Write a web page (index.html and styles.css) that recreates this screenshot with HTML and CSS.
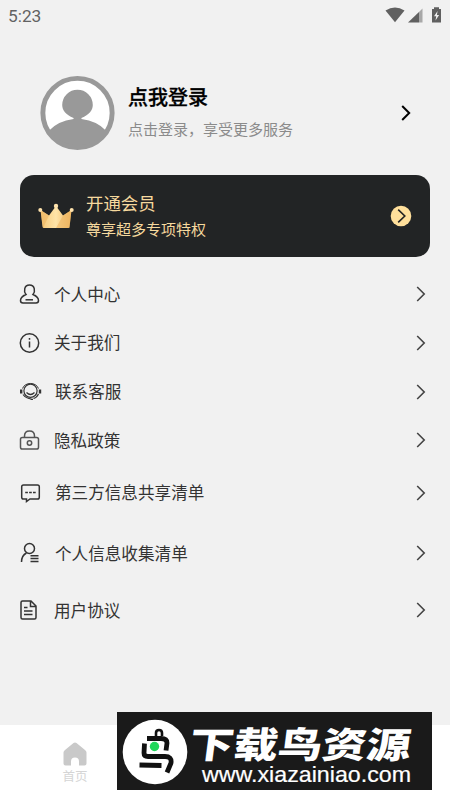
FILE: index.html
```html
<!DOCTYPE html>
<html lang="zh-CN">
<head>
<meta charset="utf-8">
<title>我的</title>
<link rel="stylesheet" href="styles.css">
</head>
<body>
<svg class="defs" width="0" height="0"><defs>
  <symbol id="chevron" viewBox="0 0 10 18"><path d="M1.200 2 8.200 9 1.200 16"/></symbol>
</defs></svg>
<div class="app">
  <header class="status">
    <span>5:23</span>
    <svg class="status-icons" viewBox="0 0 58 18">
      <path d="M0.5 3.5Q10 -2.5 19.5 3.5L10 15.2Z"/>
      <path d="M23 15.5 34 5V15.5Z"/><path opacity=".5" d="M34 5 37.5 1.5V15.5H34Z"/>
      <path fill-rule="evenodd" d="M47 2h2V.3h5V2h2v13.5h-9ZM52.6 4 49 9.2h2.2l-.7 4.3 3.6-5.4h-2.2Z"/>
    </svg>
  </header>

  <section class="profile">
    <svg class="avatar" viewBox="0 0 76 76">
      <circle cx="38" cy="38" r="35" fill="#fff"/>
      <path fill="#999" d="M9 56Q18 46 34 44V43C26 40 22.500 35 22.500 30A15.500 15.500 0 0 1 53.500 30C53.500 35 50 40 42 43V44Q58 46 67 56A35 35 0 0 1 9 56Z"/>
      <circle cx="38" cy="38" r="35.100" fill="none" stroke="#999" stroke-width="5"/>
    </svg>
    <div class="profile-text">
      <h1>点我登录</h1>
      <p>点击登录，享受更多服务</p>
    </div>
    <svg class="chevron strong"><use href="#chevron"/></svg>
  </section>

  <section class="vip">
    <svg class="crown" viewBox="0 0 36 26">
      <defs><linearGradient id="gold" x2="1"><stop stop-color="#f6c877"/><stop offset=".5" stop-color="#ffe4a8"/><stop offset="1" stop-color="#efb45c"/></linearGradient></defs>
      <path fill="url(#gold)" d="M2.500 7 11 12.500 18 3 25 12.500 33.500 7 31.500 23.500Q31.300 25 30 25H6Q4.700 25 4.500 23.500Z"/>
      <path fill="#eeb662" opacity=".6" d="M18 25 25 12.500 33.500 7 31.500 25ZM11 12.500 5 25 2.500 7Z"/>
      <g fill="#ffe3ad"><circle cx="2.300" cy="7" r="2"/><circle cx="18" cy="3" r="2.200"/><circle cx="33.700" cy="7" r="2"/></g>
    </svg>
    <div class="vip-text"><h2>开通会员</h2><p>尊享超多专项特权</p></div>
    <svg class="vip-go" viewBox="0 0 22 22"><circle cx="11" cy="11" r="10.300" fill="#ffdf9b"/><path d="M8.200 4.700 14.800 11 8.200 17.300" fill="none" stroke="#222" stroke-width="1.600"/></svg>
  </section>

  <nav class="menu">
    <a class="row h48"><svg class="icon" viewBox="0 0 24 24"><path d="M8 12.500C5.500 9.500 6 3 11.500 3S17.500 9.500 15 12.500C18.500 14 20.500 15.500 20.500 18.500Q20.500 21 18 21H5Q2.500 21 2.500 18.500C2.500 15.500 4.500 14 8 12.500Z"/><path d="M7.500 17.800H15"/></svg><span>个人中心</span><svg class="chevron"><use href="#chevron"/></svg></a>
    <a class="row h49"><svg class="icon" viewBox="0 0 24 24"><circle cx="11.500" cy="12" r="9.200"/><path d="M11.500 10.500V16.500M11.500 7V8.700"/></svg><span>关于我们</span><svg class="chevron"><use href="#chevron"/></svg></a>
    <a class="row h49"><svg class="icon" viewBox="0 0 24 24"><path d="M4.500 8.500C7 1.800 18 1.800 20.500 8.500" stroke-width="1"/><circle cx="12.500" cy="10.800" r="6.600" stroke-width="1.200"/><path d="M3.200 9.500V13.500M22 9.500V13.500" stroke-width="2.400"/><path d="M8.500 12.500Q12.500 16.500 16.500 12.500M5 14.500Q8 18.500 13.500 19M20.500 14Q18.500 18 15.500 18.500M12.500 19.300H15" stroke-width="1.200"/></svg><span class="nudge">联系客服</span><svg class="chevron"><use href="#chevron"/></svg></a>
    <a class="row h48"><svg class="icon gray" viewBox="0 0 24 24"><rect x="2.500" y="9.500" width="18" height="11.500" rx="1.800"/><path d="M6.500 9.500V8Q6.500 3 11.500 3T16.500 8V9.500"/><circle cx="11.500" cy="15" r="2.200"/></svg><span>隐私政策</span><svg class="chevron"><use href="#chevron"/></svg></a>
    <a class="row h57"><svg class="icon" viewBox="0 0 24 24"><path d="M5.500 4H19.500Q21.300 4 21.300 5.800V16.200Q21.300 18 19.500 18H12L8.500 20.500V18H5.500Q3.700 18 3.700 16.200V5.800Q3.700 4 5.500 4Z"/><path stroke-dasharray="2.700 1.200" d="M7.200 11.500H18"/></svg><span class="nudge">第三方信息共享清单</span><svg class="chevron"><use href="#chevron"/></svg></a>
    <a class="row h64"><svg class="icon" viewBox="0 0 24 24"><circle cx="11.500" cy="7.500" r="5"/><path d="M8.500 12Q3.500 14.500 3.500 21M12.500 14.800H20.500M12.500 17.600H20.500M12.500 20.500H20.500"/></svg><span class="nudge">个人信息收集清单</span><svg class="chevron"><use href="#chevron"/></svg></a>
    <a class="row h50"><svg class="icon" viewBox="0 0 24 24"><path d="M4.500 3H13L18 8V19.500Q18 21 16.500 21H4.500Q3 21 3 19.500V4.500Q3 3 4.500 3ZM12.500 3V8.500H18M6 9.500H9.500M6 13H14.500M6 16.500H14.500"/></svg><span>用户协议</span><svg class="chevron"><use href="#chevron"/></svg></a>
  </nav>

  <footer class="tabbar">
    <div class="tab"><svg viewBox="0 0 24 24"><path d="M10.500 1Q12 0 13.500 1L22 8Q23.500 9 23.500 10.500V21.500Q23.500 23.500 21.500 23.500H16V19.500A4 4 0 0 0 8 19.500V23.500H2.500Q.5 23.500 .5 21.500V10.500Q.5 9 2 8Z"/></svg><span>首页</span></div>
  </footer>

  <aside class="banner">
    <svg class="bird" viewBox="0 0 66 66">
      <circle cx="33" cy="33" r="32.300" fill="#fff"/>
      <g fill="none" stroke="#111" stroke-width="4.800" stroke-linejoin="round">
        <path d="M25 19.500H39Q45 19.500 45 24L44 31.500"/><path d="M22.500 24.500 22 34Q22 37.500 26 37.500H43Q50 37.500 49 44L45 53.500"/><path d="M17.500 46 39.500 46.500"/><path stroke-width="2.600" d="M34 18V14Q34 11 37 11T40 14V17"/>
      </g>
      <circle cx="32.500" cy="27.500" r="4.700" fill="#20d75a"/>
    </svg>
    <div class="banner-text"><strong>下载鸟资源</strong><span>www.xiazainiao.com</span></div>
  </aside>
</div>
</body>
</html>
```
FILE: styles.css
```css
* { box-sizing: border-box; }
body { margin: 0; background: #fff; }
h1, h2, p { margin: 0; font-weight: 400; }
.defs { position: absolute; }
.app {
  position: relative;
  display: flex;
  flex-direction: column;
  width: 450px;
  height: 800px;
  overflow: hidden;
  background: #f1f1f1;
  font-family: "Noto Sans CJK SC", sans-serif;
}
.status {
  display: flex;
  align-items: center;
  justify-content: space-between;
  height: 32px;
  padding: 0 7px 0 8px;
  color: #626262;
  font: 17.3px Roboto, sans-serif;
}
.status-icons { width: 58px; height: 18px; fill: #606060; margin-top: 0; }
.profile {
  display: flex;
  align-items: center;
  height: 76px;
  margin: 43px 39px 0 40px;
}
.avatar { width: 75px; height: 76px; margin: -1px 13px 0 0; }
.profile-text { flex: 1; }
h1 { color: #000; font-size: 20px; line-height: 32px; font-weight: 500; -webkit-text-stroke: .3px; }
.profile-text p { color: #8b8b8b; font-size: 15px; line-height: 32px; }
.chevron { width: 10px; height: 18px; fill: none; stroke: #444; stroke-width: 1.6; }
.chevron.strong { stroke: #000; stroke-width: 2; }
.vip {
  display: flex;
  align-items: center;
  height: 82px;
  margin: 24px 20px 0;
  padding: 0 18px;
  border-radius: 14px;
  background: #222425;
  color: #f6d99e;
}
.crown { width: 36px; height: 26px; margin-right: 12px; }
.vip-text { flex: 1; padding-bottom: 2px; }
h2 { font-size: 17.4px; line-height: 27px; }
.vip-text p { font-size: 15px; line-height: 25px; }
.vip-go { width: 22px; height: 22px; }
.menu { margin-top: 13px; }
.row {
  display: flex;
  align-items: center;
  padding: 0 24px 0 18px;
  color: #333;
  font-size: 16.6px;
}
.row span { flex: 1; line-height: 24px; padding-bottom: 1px; }
.row .nudge { padding-left: 1px; }
.h48 { height: 48px; }
.h49 { height: 49px; }
.h50 { height: 50px; }
.h57 { height: 57px; }
.h64 { height: 64px; }
.icon { width: 24px; height: 24px; margin-right: 12px; fill: none; stroke: #333; stroke-width: 1.5; }
.icon.gray { stroke: #555; }
.tabbar { height: 75px; margin-top: auto; padding: 17px 0 0 50px; background: #fff; }
.tab { display: flex; flex-direction: column; align-items: center; width: 50px; color: #d5d5d5; font-size: 12.5px; line-height: 20px; }
.tab svg { width: 24px; height: 24px; fill: #c9c9c9; }
.banner {
  position: absolute;
  left: 117px;
  top: 712px;
  display: flex;
  width: 315px;
  height: 78px;
  padding: 7px 5px;
  background: #1a1a1a;
  color: #fff;
}
.bird { width: 66px; height: 66px; }
.banner-text { display: flex; flex-direction: column; align-items: flex-start; padding: 5px 0 0 2px; }
.banner-text strong { font-size: 36px; line-height: 36px; font-weight: 900; transform: scaleX(1.23) skewX(-6deg); transform-origin: left center; white-space: nowrap; }
.banner-text span { margin: 3px 0 0 12px; font: 21.5px/24px "Liberation Sans", sans-serif; -webkit-text-stroke: .2px; transform: scaleX(1.08); transform-origin: left center; }
```
